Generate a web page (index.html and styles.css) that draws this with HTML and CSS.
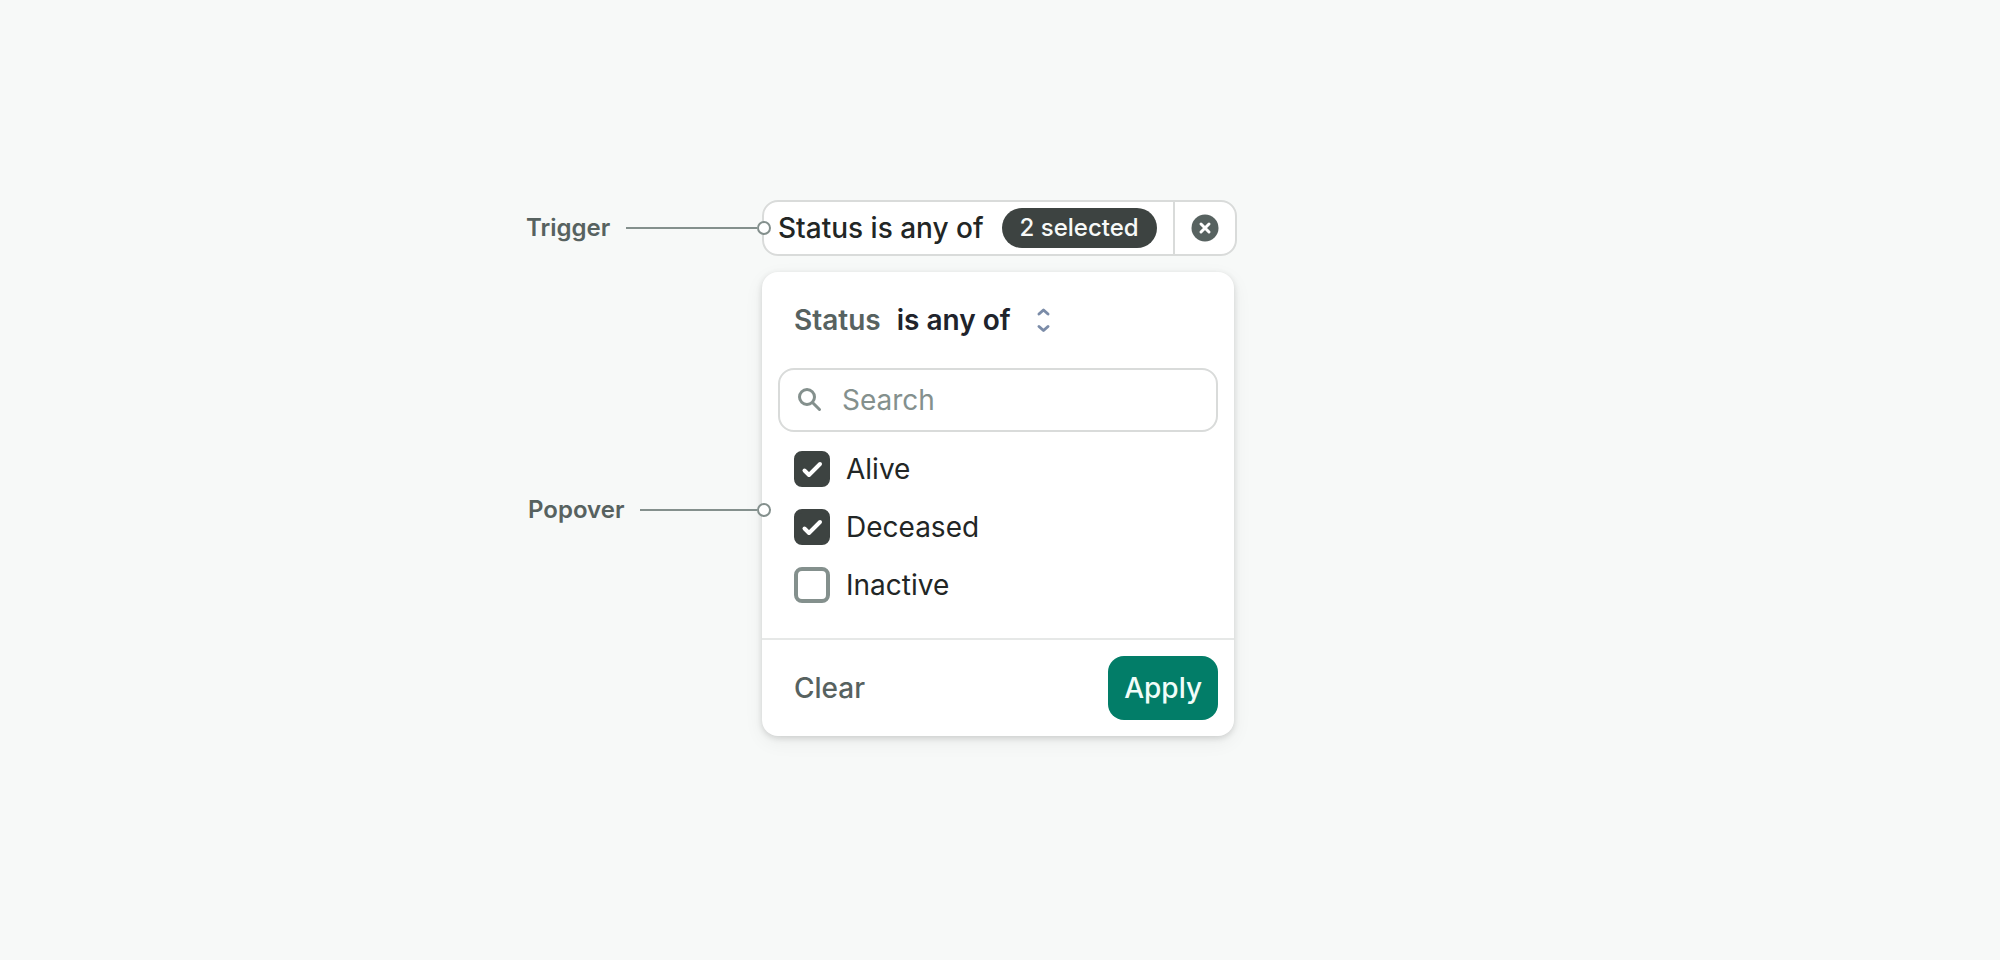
FILE: index.html
```html
<!DOCTYPE html>
<html lang="en">
<head>
    <meta charset="UTF-8">
    <meta name="viewport" content="width=device-width, initial-scale=1.0">
    <title>Filter anatomy</title>
    <link rel="stylesheet" href="styles.css">
</head>
<body>
    <main class="anatomy">
        <div class="callout">
            <span class="callout-label">Trigger</span>
            <span class="callout-line"></span>
            <span class="callout-dot"></span>
        </div>

        <div class="trigger">
            <button class="trigger-main" type="button">
                Status is any of
                <span class="pill">2 selected</span>
            </button>
            <button class="trigger-clear" type="button" aria-label="Remove filter">
                <svg width="28" height="28" viewBox="0 0 28 28" fill="none">
                    <circle cx="14" cy="14" r="13.5" fill="#576260"/>
                    <path d="M10 10l8 8M18 10l-8 8" stroke="#fff" stroke-width="3" stroke-linecap="round"/>
                </svg>
            </button>
        </div>

        <div class="callout callout-popover">
            <span class="callout-label">Popover</span>
            <span class="callout-line"></span>
            <span class="callout-dot"></span>
        </div>

        <form class="popover">
            <div class="popover-header">
                <label class="field-name" for="operator">Status</label>
                <div class="operator">
                    <select id="operator">
                        <option>is any of</option>
                    </select>
                    <svg width="16" height="28" viewBox="0 0 16 28" fill="none" stroke="#7b8ca8" stroke-width="3" stroke-linecap="round" stroke-linejoin="round">
                        <path d="M4 8l4.5-4 4.5 4M4 20.500l4.500 4 4.500-4"/>
                    </svg>
                </div>
            </div>

            <div class="search">
                <svg width="28" height="28" viewBox="0 0 28 28" fill="none" stroke="#84908d" stroke-width="3" stroke-linecap="round">
                    <circle cx="11" cy="11" r="7.5"/>
                    <path d="M16.5 16.5l7 7"/>
                </svg>
                <input type="text" placeholder="Search" aria-label="Search">
            </div>

            <div class="options">
                <label class="option">
                    <span class="checkbox">
                        <input type="checkbox" checked>
                        <svg width="36" height="36" viewBox="0 0 36 36"><path d="M10.5 19.5l4.5 4.5 11-11"/></svg>
                    </span>
                    Alive
                </label>
                <label class="option">
                    <span class="checkbox">
                        <input type="checkbox" checked>
                        <svg width="36" height="36" viewBox="0 0 36 36"><path d="M10.5 19.5l4.5 4.5 11-11"/></svg>
                    </span>
                    Deceased
                </label>
                <label class="option">
                    <span class="checkbox">
                        <input type="checkbox">
                        <svg width="36" height="36" viewBox="0 0 36 36"><path d="M10.5 19.5l4.5 4.5 11-11"/></svg>
                    </span>
                    Inactive
                </label>
            </div>

            <div class="popover-footer">
                <button class="btn" type="reset">Clear</button>
                <button class="btn btn-primary" type="button">Apply</button>
            </div>
        </form>
    </main>
</body>
</html>
```
FILE: styles.css
```css
* {
    margin: 0;
    padding: 0;
    box-sizing: border-box;
}

body {
    background-color: #f7f9f8;
    color: #222625;
    font-family: Inter, "Liberation Sans", sans-serif;
    font-size: 28px;
    line-height: 40px;
}

button,
input,
select {
    font: inherit;
    color: inherit;
    background: none;
    border: none;
}

button,
select,
.option {
    cursor: pointer;
}

svg {
    display: block;
    flex: none;
}

/* Layout */
.anatomy {
    display: grid;
    grid-template-columns: 1fr 476px 1fr;
    row-gap: 16px;
    padding: 200px 0;
}

/* Callouts */
.callout {
    grid-column: 1;
    justify-self: end;
    z-index: 1;
    display: flex;
    align-items: center;
    width: 245px;
    margin-right: -9px;
}

.callout-popover {
    width: 243px;
    padding-top: 12px;
}

.callout-label {
    margin-right: 16px;
    color: #576260;
    font-size: 24px;
    font-weight: 600;
}

.callout-line {
    flex: 1;
    height: 2px;
    background-color: #84908d;
}

.callout-dot {
    width: 14px;
    height: 14px;
    border: 2px solid #84908d;
    border-radius: 50%;
    background-color: #fff;
}

/* Trigger */
.trigger {
    grid-column: 2;
    justify-self: start;
    display: flex;
    height: 56px;
    border: 2px solid #d9dbda;
    border-radius: 16px;
    background-color: #fff;
}

.trigger-main {
    display: flex;
    align-items: center;
    gap: 18px;
    padding: 0 16px 0 14px;
    font-weight: 500;
    white-space: nowrap;
}

.pill {
    padding: 0 18px;
    border-radius: 20px;
    background-color: #3d4341;
    color: #f7f9f8;
    font-size: 24px;
}

.trigger-clear {
    padding: 0 16px;
    border-left: 2px solid #d9dbda;
}

/* Popover */
.popover {
    grid-column: 2;
    width: 472px;
    border-radius: 16px;
    background-color: #fff;
    box-shadow: 0 2px 6px rgba(0, 0, 0, 0.14), 0 6px 20px rgba(0, 0, 0, 0.06);
}

.popover-header {
    display: flex;
    align-items: center;
    gap: 16px;
    padding: 28px 32px;
    font-weight: 600;
}

.field-name {
    color: #576260;
}

.operator {
    display: flex;
    align-items: center;
    gap: 24px;
}

.operator select {
    appearance: none;
    height: 40px;
    color: #20232b;
}

.search {
    display: flex;
    align-items: center;
    gap: 18px;
    height: 64px;
    margin: 0 16px;
    padding: 0 16px;
    border: 2px solid #d9dbda;
    border-radius: 16px;
}

.search input {
    flex: 1;
    min-width: 0;
    outline: none;
}

.search input::placeholder {
    color: #84908d;
    opacity: 1;
}

.options {
    padding: 8px 32px 24px;
}

.option {
    display: flex;
    align-items: center;
    gap: 16px;
    height: 58px;
}

.checkbox {
    display: grid;
}

.checkbox input,
.checkbox svg {
    grid-area: 1 / 1;
}

.checkbox input {
    appearance: none;
    width: 36px;
    height: 36px;
    border: 4px solid #84908d;
    border-radius: 8px;
}

.checkbox input:checked {
    border-color: #3d4341;
    background-color: #3d4341;
}

.checkbox svg {
    visibility: hidden;
    pointer-events: none;
    fill: none;
    stroke: #fff;
    stroke-width: 4;
    stroke-linecap: round;
    stroke-linejoin: round;
}

.checkbox input:checked + svg {
    visibility: visible;
}

.popover-footer {
    display: flex;
    justify-content: space-between;
    padding: 16px;
    border-top: 2px solid #e6e8e7;
}

.btn {
    height: 64px;
    padding: 0 16px;
    border-radius: 16px;
    color: #576260;
    font-weight: 500;
}

.btn-primary {
    background-color: #027d68;
    color: #f1fdf9;
}
```
